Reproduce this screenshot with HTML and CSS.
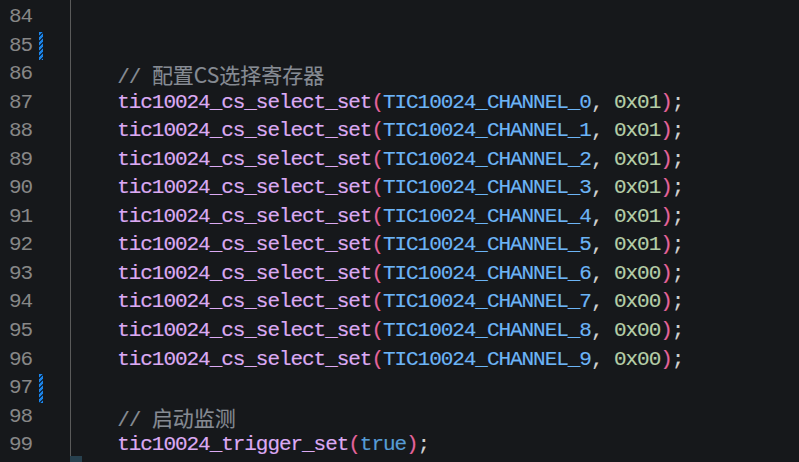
FILE: index.html
```html
<!DOCTYPE html>
<html lang="zh">
<head>
<meta charset="utf-8">
<title>editor</title>
<link rel="stylesheet" href="styles.css">
</head>
<body>
<div class="editor">
  <div class="gutter">
    <div class="ln"><span class="num">84</span></div>
    <div class="ln"><span class="num">85</span><span class="mark"></span></div>
    <div class="ln"><span class="num">86</span></div>
    <div class="ln"><span class="num">87</span></div>
    <div class="ln"><span class="num">88</span></div>
    <div class="ln"><span class="num">89</span></div>
    <div class="ln"><span class="num">90</span></div>
    <div class="ln"><span class="num">91</span></div>
    <div class="ln"><span class="num">92</span></div>
    <div class="ln"><span class="num">93</span></div>
    <div class="ln"><span class="num">94</span></div>
    <div class="ln"><span class="num">95</span></div>
    <div class="ln"><span class="num">96</span></div>
    <div class="ln"><span class="num">97</span><span class="mark"></span></div>
    <div class="ln"><span class="num">98</span></div>
    <div class="ln"><span class="num">99</span></div>
  </div>
  <div class="code">
    <div class="line"> </div>
    <div class="line"> </div>
    <div class="line">    <span class="cm">// <span class="cjk">配置CS选择寄存器</span></span></div>
    <div class="line">    <span class="fn">tic10024_cs_select_set</span><span class="br">(</span><span class="cn">TIC10024_CHANNEL_0</span><span class="pu">, </span><span class="nu">0x01</span><span class="br">)</span><span class="pu">;</span></div>
    <div class="line">    <span class="fn">tic10024_cs_select_set</span><span class="br">(</span><span class="cn">TIC10024_CHANNEL_1</span><span class="pu">, </span><span class="nu">0x01</span><span class="br">)</span><span class="pu">;</span></div>
    <div class="line">    <span class="fn">tic10024_cs_select_set</span><span class="br">(</span><span class="cn">TIC10024_CHANNEL_2</span><span class="pu">, </span><span class="nu">0x01</span><span class="br">)</span><span class="pu">;</span></div>
    <div class="line">    <span class="fn">tic10024_cs_select_set</span><span class="br">(</span><span class="cn">TIC10024_CHANNEL_3</span><span class="pu">, </span><span class="nu">0x01</span><span class="br">)</span><span class="pu">;</span></div>
    <div class="line">    <span class="fn">tic10024_cs_select_set</span><span class="br">(</span><span class="cn">TIC10024_CHANNEL_4</span><span class="pu">, </span><span class="nu">0x01</span><span class="br">)</span><span class="pu">;</span></div>
    <div class="line">    <span class="fn">tic10024_cs_select_set</span><span class="br">(</span><span class="cn">TIC10024_CHANNEL_5</span><span class="pu">, </span><span class="nu">0x01</span><span class="br">)</span><span class="pu">;</span></div>
    <div class="line">    <span class="fn">tic10024_cs_select_set</span><span class="br">(</span><span class="cn">TIC10024_CHANNEL_6</span><span class="pu">, </span><span class="nu">0x00</span><span class="br">)</span><span class="pu">;</span></div>
    <div class="line">    <span class="fn">tic10024_cs_select_set</span><span class="br">(</span><span class="cn">TIC10024_CHANNEL_7</span><span class="pu">, </span><span class="nu">0x00</span><span class="br">)</span><span class="pu">;</span></div>
    <div class="line">    <span class="fn">tic10024_cs_select_set</span><span class="br">(</span><span class="cn">TIC10024_CHANNEL_8</span><span class="pu">, </span><span class="nu">0x00</span><span class="br">)</span><span class="pu">;</span></div>
    <div class="line">    <span class="fn">tic10024_cs_select_set</span><span class="br">(</span><span class="cn">TIC10024_CHANNEL_9</span><span class="pu">, </span><span class="nu">0x00</span><span class="br">)</span><span class="pu">;</span></div>
    <div class="line"> </div>
    <div class="line">    <span class="cm">// <span class="cjk">启动监测</span></span></div>
    <div class="line">    <span class="fn">tic10024_trigger_set</span><span class="br">(</span><span class="kw">true</span><span class="br">)</span><span class="pu">;</span></div>
    <span class="thumb"></span>
  </div>
</div>
</body>
</html>
```
FILE: styles.css
```css
html, body {
  margin: 0;
  padding: 0;
  width: 799px;
  height: 462px;
  overflow: hidden;
  background: #16181b;
}

.editor {
  display: flex;
  padding-top: 3px;
  height: 459px;
  font-family: "Liberation Mono", "Noto Sans CJK SC", monospace;
  font-size: 21px;
  letter-spacing: -1.05px;
}

.gutter {
  width: 70px;
  flex: none;
  display: flex;
  flex-direction: column;
}

.ln {
  height: 28.55px;
  line-height: 28.55px;
  display: flex;
  align-items: stretch;
}

.num {
  width: 32px;
  text-align: right;
  color: #878787;
}

.mark {
  width: 4px;
  margin-left: 7px;
  background: repeating-linear-gradient(135deg, #1c84e8 0 2.4px, #0d2f52 2.4px 3.6px);
}

.code {
  position: relative;
  flex: 1;
  margin-top: -3px;
  padding-top: 3px;
  border-left: 1px solid #5a5a5a;
}

.line {
  height: 28.55px;
  line-height: 28.55px;
  white-space: pre;
  color: #d4d4d4;
  -webkit-text-stroke: 0.15px currentColor;
}

.fn { color: #dcaaf3; }
.cn { color: #6cb4f6; }
.br { color: #e5649c; }
.nu { color: #b5cea8; }
.pu { color: #d0d0d0; }
.kw { color: #569cd6; }
.cm { color: #868b93; }

.cjk {
  font-family: "Noto Sans CJK SC", sans-serif;
  font-size: 21px;
  letter-spacing: 0;
}

.thumb {
  position: absolute;
  left: -1px;
  bottom: -2px;
  width: 12px;
  height: 8px;
  background: #27404e;
}
```
